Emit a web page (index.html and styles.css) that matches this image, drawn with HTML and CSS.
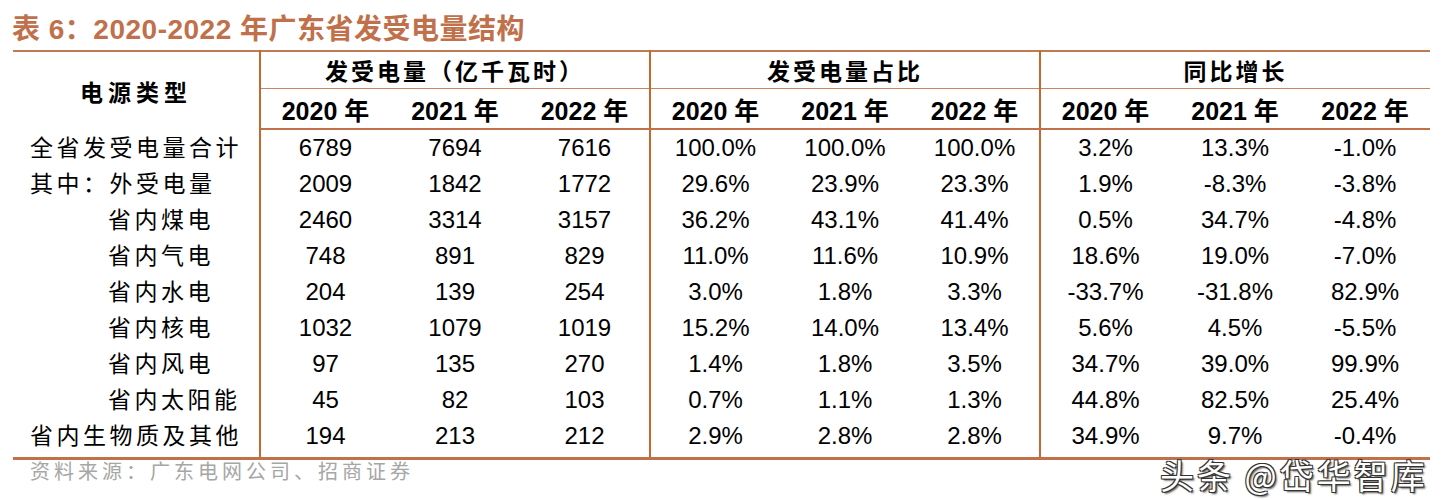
FILE: index.html
```html
<!DOCTYPE html>
<html lang="zh-CN">
<head>
<meta charset="utf-8">
<title>表6</title>
<link rel="stylesheet" href="styles.css">
</head>
<body>
<div class="page">
  <h1 class="title">表 6：2020-2022 年广东省发受电量结构</h1>
  <table class="tbl">
    <colgroup>
      <col class="c-label">
      <col class="c-num"><col class="c-num"><col class="c-num">
      <col class="c-num"><col class="c-num"><col class="c-num">
      <col class="c-num"><col class="c-num"><col class="c-num">
    </colgroup>
    <thead>
      <tr class="h1">
        <th rowspan="2" class="lab-h g-end">电源类型</th>
        <th colspan="3" class="grp g-end">发受电量（亿千瓦时）</th>
        <th colspan="3" class="grp g-end">发受电量占比</th>
        <th colspan="3" class="grp">同比增长</th>
      </tr>
      <tr class="h2">
        <th>2020 年</th><th>2021 年</th><th class="g-end">2022 年</th>
        <th>2020 年</th><th>2021 年</th><th class="g-end">2022 年</th>
        <th>2020 年</th><th>2021 年</th><th>2022 年</th>
      </tr>
    </thead>
    <tbody>
      <tr><td class="lab g-end">全省发受电量合计</td><td>6789</td><td>7694</td><td class="g-end">7616</td><td>100.0%</td><td>100.0%</td><td class="g-end">100.0%</td><td>3.2%</td><td>13.3%</td><td>-1.0%</td></tr>
      <tr><td class="lab g-end">其中：外受电量</td><td>2009</td><td>1842</td><td class="g-end">1772</td><td>29.6%</td><td>23.9%</td><td class="g-end">23.3%</td><td>1.9%</td><td>-8.3%</td><td>-3.8%</td></tr>
      <tr><td class="lab ind g-end">省内煤电</td><td>2460</td><td>3314</td><td class="g-end">3157</td><td>36.2%</td><td>43.1%</td><td class="g-end">41.4%</td><td>0.5%</td><td>34.7%</td><td>-4.8%</td></tr>
      <tr><td class="lab ind g-end">省内气电</td><td>748</td><td>891</td><td class="g-end">829</td><td>11.0%</td><td>11.6%</td><td class="g-end">10.9%</td><td>18.6%</td><td>19.0%</td><td>-7.0%</td></tr>
      <tr><td class="lab ind g-end">省内水电</td><td>204</td><td>139</td><td class="g-end">254</td><td>3.0%</td><td>1.8%</td><td class="g-end">3.3%</td><td>-33.7%</td><td>-31.8%</td><td>82.9%</td></tr>
      <tr><td class="lab ind g-end">省内核电</td><td>1032</td><td>1079</td><td class="g-end">1019</td><td>15.2%</td><td>14.0%</td><td class="g-end">13.4%</td><td>5.6%</td><td>4.5%</td><td>-5.5%</td></tr>
      <tr><td class="lab ind g-end">省内风电</td><td>97</td><td>135</td><td class="g-end">270</td><td>1.4%</td><td>1.8%</td><td class="g-end">3.5%</td><td>34.7%</td><td>39.0%</td><td>99.9%</td></tr>
      <tr><td class="lab ind g-end">省内太阳能</td><td>45</td><td>82</td><td class="g-end">103</td><td>0.7%</td><td>1.1%</td><td class="g-end">1.3%</td><td>44.8%</td><td>82.5%</td><td>25.4%</td></tr>
      <tr class="last"><td class="lab g-end">省内生物质及其他</td><td>194</td><td>213</td><td class="g-end">212</td><td>2.9%</td><td>2.8%</td><td class="g-end">2.8%</td><td>34.9%</td><td>9.7%</td><td>-0.4%</td></tr>
    </tbody>
  </table>
  <p class="source">资料来源：广东电网公司、招商证券</p>
  <div class="watermark">头条 @岱华智库</div>
</div>
</body>
</html>
```

FILE: styles.css
```css
html, body {
  margin: 0;
  padding: 0;
  background: #ffffff;
}

.page {
  position: relative;
  width: 1444px;
  height: 500px;
  overflow: hidden;
  font-family: "Liberation Sans", "Noto Sans CJK SC", sans-serif;
  color: #000;
}

.title {
  margin: 0;
  padding: 13px 0 0 12px;
  height: 37px;
  font-size: 28px;
  line-height: 34px;
  font-weight: bold;
  color: #c0704a;
  letter-spacing: 0.5px;
}

.tbl {
  margin-left: 13px;
  width: 1414px;
  table-layout: fixed;
  border-collapse: collapse;
  border-top: 2px solid #c07a55;
  border-bottom: 3px solid #c0704a;
}

.c-label { width: 247px; }
.c-num { width: 130px; }

.tbl th, .tbl td {
  padding: 0;
  text-align: center;
  vertical-align: middle;
  white-space: nowrap;
}

.g-end { border-right: 2px solid #c4692c; }

.tbl th {
  font-weight: bold;
  font-size: 25px;
}

.tbl .h1 th {
  height: 36px;
  border-bottom: 1px solid #c8845e;
  font-size: 23px;
  letter-spacing: 3px;
}

.tbl .h1 th.lab-h {
  border-bottom: none;
  letter-spacing: 5px;
}

.tbl .h2 th {
  height: 39px;
  border-bottom: 2px solid #c0704a;
}

.tbl th.lab-h { border-bottom: 2px solid #c0704a; }

.tbl td {
  height: 36px;
  font-size: 24px;
  line-height: 36px;
}

.tbl td.lab {
  text-align: left;
  padding-left: 17px;
  font-size: 23px;
  letter-spacing: 3.5px;
}

.tbl td.lab.ind { padding-left: 95px; }

.tbl tr.last td {
  height: 36px;
  padding-bottom: 3px;
  vertical-align: top;
}

.source {
  margin: 0;
  padding: 0 0 0 30px;
  font-size: 20px;
  line-height: 22px;
  color: #a6a6a6;
  letter-spacing: 4px;
  font-family: "Noto Sans CJK SC", sans-serif;
}

.watermark {
  position: absolute;
  left: 1160px;
  top: 456px;
  font-family: "Noto Sans CJK SC", sans-serif;
  font-size: 34px;
  line-height: 38px;
  color: #ffffff;
  letter-spacing: 3px;
  text-shadow: 1px 1px 0 #333, -1px 1px 0 #333, 1px -1px 0 #333, -1px -1px 0 #333, 2px 2px 2px #555;
}
```
